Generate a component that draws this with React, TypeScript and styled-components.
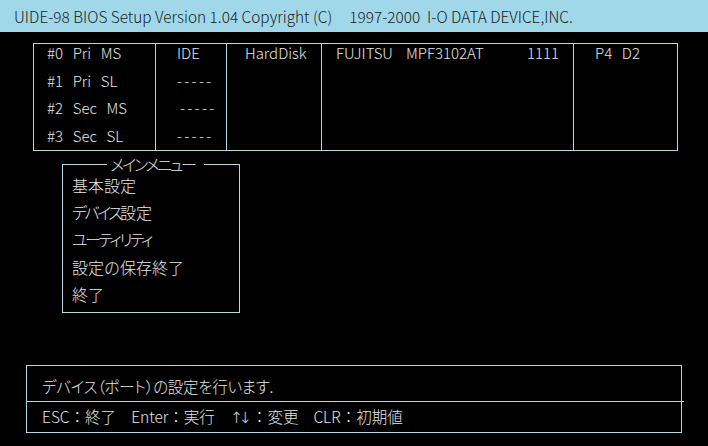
import styled, { createGlobalStyle } from 'styled-components';

const GlobalStyle = createGlobalStyle`
    html, body {
        margin: 0;
        padding: 0;
        background: #000;
    }
    body {
        width: 708px;
        height: 446px;
        overflow: hidden;
        font-family: 'Noto Sans CJK JP', 'Noto Sans', sans-serif;
        font-size: 15px;
        font-weight: 300;
        color: #e6e6e6;
    }
`;

const line = '#b4d8e2';

const Screen = styled.div`
    display: flex;
    flex-direction: column;
    width: 708px;
    height: 446px;
    background: #000;
`;

const TitleBar = styled.div`
    height: 32px;
    line-height: 32px;
    padding-left: 14px;
    background: #a0d8ea;
    color: #1a1a1a;
    font-size: 15.4px;
    white-space: pre;
`;

const DriveTable = styled.div`
    display: flex;
    width: 645px;
    height: 108px;
    margin: 11px 0 0 33px;
    box-sizing: border-box;
    border: 1px solid ${line};
    overflow: hidden;
`;

const Column = styled.div<{ $w?: number; $pad: number; $first?: boolean }>`
    display: flex;
    flex-direction: column;
    flex: ${(p) => (p.$w ? `0 0 ${p.$w}px` : '1 1 auto')};
    box-sizing: border-box;
    padding-left: ${(p) => p.$pad}px;
    border-left: ${(p) => (p.$first ? 'none' : `1px solid ${line}`)};
`;

const Line = styled.div<{ $indent?: number; $dashes?: boolean }>`
    flex: 0 0 27.6px;
    line-height: 18px;
    white-space: pre;
    word-spacing: 1.5px;
    padding-left: ${(p) => p.$indent ?? 0}px;
    letter-spacing: ${(p) => (p.$dashes ? '2.3px' : 'normal')};
`;

const ModelLine = styled.div`
    display: flex;
    flex: 0 0 27.6px;
    line-height: 18px;
    white-space: pre;
`;

const ModelField = styled.span<{ $w: number }>`
    flex: 0 0 ${(p) => p.$w}px;
`;

const MenuBox = styled.fieldset`
    width: 178px;
    height: 157px;
    margin: 5px 0 0 62px;
    padding: 0 0 0 9px;
    box-sizing: border-box;
    border: 1px solid ${line};
    font-size: 16px;
`;

const MenuTitle = styled.legend`
    margin: 0 auto;
    padding: 0 6px;
    line-height: 16px;
    transform: translateX(-3px);
`;

const MenuItem = styled.div`
    height: 27.2px;
    line-height: 20px;
    &:first-of-type {
        margin-top: 3px;
    }
`;

// katakana in this UI font runs narrower than the kanji
const Kana = styled.span<{ $tight?: number }>`
    font-feature-settings: 'palt';
    letter-spacing: ${(p) => p.$tight ?? -2.5}px;
`;

const HelpBox = styled.div`
    display: flex;
    flex-direction: column;
    width: 656px;
    margin: 52px 0 0 26px;
    box-sizing: border-box;
    border: 1px solid ${line};
    font-size: 15.5px;
`;

const HelpRow = styled.div<{ $h: number; $divided?: boolean }>`
    display: flex;
    gap: 15px;
    align-items: center;
    height: ${(p) => p.$h}px;
    box-sizing: border-box;
    padding: ${(p) => (p.$divided ? '0 0 3px 15px' : '5px 0 0 15px')};
    border-top: ${(p) => (p.$divided ? `1px solid ${line}` : 'none')};
    margin-right: ${(p) => (p.$divided ? '-3px' : '0')};
`;

const Message = styled.span`
    font-feature-settings: 'palt';
    letter-spacing: -0.3px;
`;

const KeyHint = styled.span`
    white-space: pre;
`;

const Arrows = styled.span`
    font-family: 'DejaVu Sans', sans-serif;
    font-size: 15.5px;
    letter-spacing: -4px;
    margin-right: 4px;
`;

const withKana = (text: string, tight?: number) =>
    text.split(/([\u30A0-\u30FF]+)/).map((part, i) =>
        /[\u30A0-\u30FF]/.test(part) ? (
            <Kana key={i} $tight={tight}>
                {part}
            </Kana>
        ) : (
            part
        ),
    );

const drives = ['#0  Pri  MS', '#1  Pri  SL', '#2  Sec  MS', '#3  Sec  SL'];
const ports = [
    { text: 'IDE', indent: 0, dashes: false },
    { text: '-----', indent: 0, dashes: true },
    { text: '-----', indent: 3, dashes: true },
    { text: '-----', indent: 0, dashes: true },
];
const menu = ['基本設定', 'デバイス設定', 'ユーティリティ', '設定の保存終了', '終了'];
const keys = [
    { key: 'ESC', label: '終了' },
    { key: 'Enter', label: '実行' },
    { key: '↑↓', label: '変更' },
    { key: 'CLR', label: '初期値' },
];

const App = () => {
    return (
        <Screen>
            <GlobalStyle />
            <TitleBar>UIDE-98 BIOS Setup Version 1.04 Copyright (C)     1997-2000  I-O DATA DEVICE,INC.</TitleBar>

            <DriveTable>
                <Column $w={121} $pad={13} $first>
                    {drives.map((d) => (
                        <Line key={d}>{d}</Line>
                    ))}
                </Column>
                <Column $w={71} $pad={21}>
                    {ports.map((p, i) => (
                        <Line key={i} $indent={p.indent} $dashes={p.dashes}>
                            {p.text}
                        </Line>
                    ))}
                </Column>
                <Column $w={95} $pad={18}>
                    <Line>HardDisk</Line>
                </Column>
                <Column $w={252} $pad={14}>
                    <ModelLine>
                        <ModelField $w={70}>FUJITSU</ModelField>
                        <ModelField $w={121}>MPF3102AT</ModelField>
                        <ModelField $w={40}>1111</ModelField>
                    </ModelLine>
                </Column>
                <Column $pad={21}>
                    <Line>P4  D2</Line>
                </Column>
            </DriveTable>

            <MenuBox>
                <MenuTitle>{withKana('メインメニュー', -2.2)}</MenuTitle>
                {menu.map((m) => (
                    <MenuItem key={m}>{withKana(m)}</MenuItem>
                ))}
            </MenuBox>

            <HelpBox>
                <HelpRow $h={35}>
                    <Message>デバイス（ポート）の設定を行います.</Message>
                </HelpRow>
                <HelpRow $h={31} $divided>
                    {keys.map((k) => (
                        <KeyHint key={k.key}>
                            {k.key === '↑↓' ? <Arrows>{k.key}</Arrows> : k.key}：{k.label}
                        </KeyHint>
                    ))}
                </HelpRow>
            </HelpBox>
        </Screen>
    );
};

export default App;
